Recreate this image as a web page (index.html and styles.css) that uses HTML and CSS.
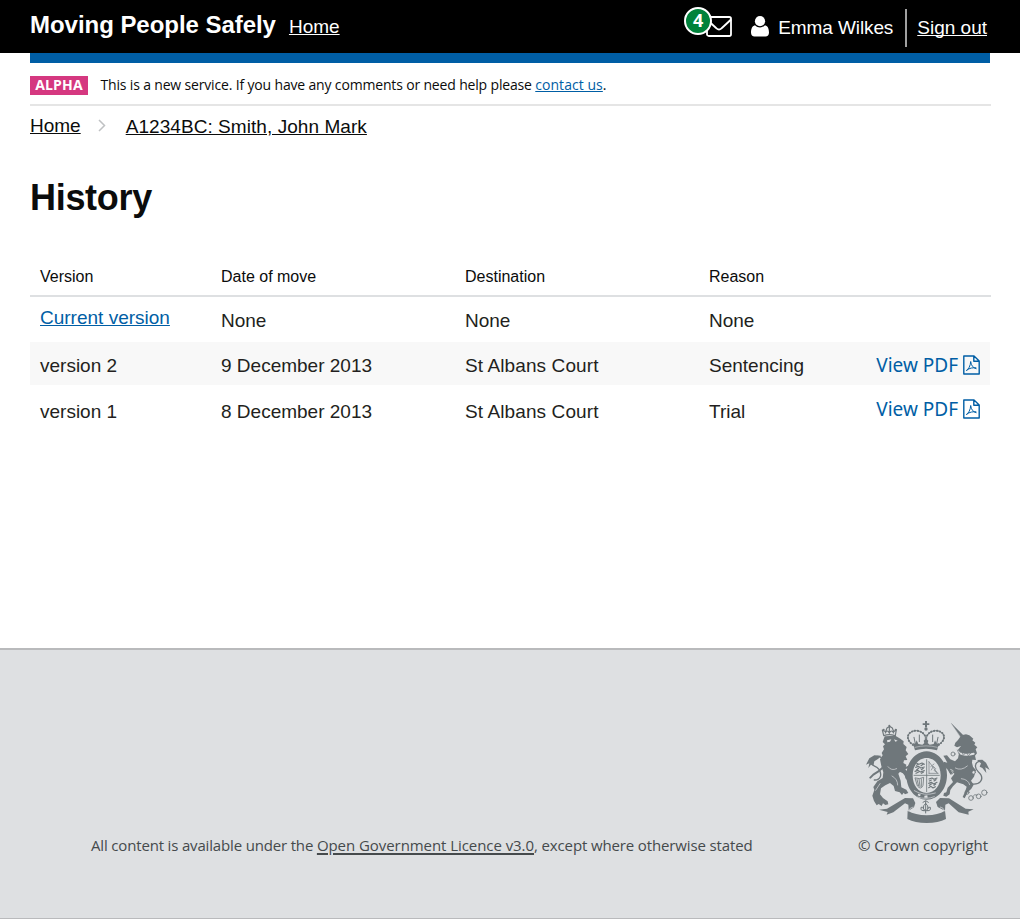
FILE: index.html
```html
<!DOCTYPE html>
<html lang="en">
<head>
<meta charset="utf-8">
<title>History - Moving People Safely</title>
<link rel="stylesheet" href="styles.css">
</head>
<body>
<header class="header">
  <div class="header-brand">
    <span class="site-title">Moving People Safely</span>
    <a class="header-link" href="#">Home</a>
  </div>
  <div class="header-user">
    <a class="mail" href="#">
      <svg class="mail-icon" width="26" height="21" viewBox="0 0 26 21" fill="none" stroke="#fff" stroke-width="1.800" stroke-linejoin="round"><rect x="1" y="1" width="24" height="19" rx="1.800"/><path d="M1 3.500C5 7.500 8 10 10.500 12.300C12.300 14 13.700 14 15.500 12.300C18 10 21 7.500 25 3.500"/></svg>
      <span class="badge">4</span>
    </a>
    <svg class="user-icon" width="18" height="21" viewBox="0 0 18 21" fill="#fff"><circle cx="9" cy="5.200" r="5.100"/><path d="M4 9.200C.8 10 0 13.500 0 16.500C0 19 1.400 20.500 3.500 20.500H14.500C16.600 20.500 18 19 18 16.500C18 13.500 17.200 10 14 9.200C11 12.100 7 12.100 4 9.200Z"/></svg>
    <span class="user-name">Emma Wilkes</span>
    <span class="divider"></span>
    <a class="sign-out" href="#">Sign out</a>
  </div>
</header>

<div class="wrapper">
  <div class="blue-bar"></div>
  <div class="phase">
    <strong class="phase-tag">ALPHA</strong>
    <p class="phase-text">This is a new service. If you have any comments or need help please <a class="link contact" href="#">contact us</a>.</p>
  </div>

  <nav class="crumbs">
    <a class="crumb" href="#">Home</a>
    <svg class="chevron" width="8" height="13" viewBox="0 0 8 13" fill="none" stroke="#bfc1c3" stroke-width="1.500"><path d="M1 1L6.500 6.500L1 12"/></svg>
    <a class="crumb crumb-last" href="#">A1234BC: Smith, John Mark</a>
  </nav>

  <main class="main">
    <h1 class="title">History</h1>
    <table class="history">
      <thead>
        <tr><th class="col-version">Version</th><th class="col-date">Date of move</th><th class="col-dest">Destination</th><th class="col-reason">Reason</th><th></th></tr>
      </thead>
      <tbody>
        <tr class="row-current"><td class="cell-link"><a class="link" href="#">Current version</a></td><td>None</td><td>None</td><td>None</td><td></td></tr>
        <tr class="row-shaded"><td>version 2</td><td>9 December 2013</td><td class="court">St Albans Court</td><td>Sentencing</td>
          <td class="cell-pdf"><a class="pdf" href="#">View PDF <svg class="pdf-icon" width="17" height="20" viewBox="0 0 17 20" fill="none" stroke="#005ea5"><path stroke-width="1.400" stroke-linejoin="round" d="M.8 1H11L16.200 6V19H.8ZM10.800 1V6.200H16.200"/><path stroke-width="1" d="M3.200 15.600C5.300 14.500 7.500 11 7.700 6.500C7.900 10.500 10.500 13.200 13.500 13.800M3.500 15.500C6.500 12.800 10 12.600 13.300 12.800"/></svg></a></td></tr>
        <tr class="row-plain"><td>version 1</td><td>8 December 2013</td><td class="court">St Albans Court</td><td>Trial</td>
          <td class="cell-pdf"><a class="pdf" href="#">View PDF <svg class="pdf-icon" width="17" height="20" viewBox="0 0 17 20" fill="none" stroke="#005ea5"><path stroke-width="1.400" stroke-linejoin="round" d="M.8 1H11L16.200 6V19H.8ZM10.800 1V6.200H16.200"/><path stroke-width="1" d="M3.200 15.600C5.300 14.500 7.500 11 7.700 6.500C7.900 10.500 10.500 13.200 13.500 13.800M3.500 15.500C6.500 12.800 10 12.600 13.300 12.800"/></svg></a></td></tr>
      </tbody>
    </table>
  </main>
</div>

<footer class="footer">
  <p class="licence"><span class="lead">All content is available under the </span><a class="ogl" href="#">Open Government Licence v3.0</a><span class="tail">, except where otherwise stated</span></p>
  <div class="copyright">
    <svg class="crest" width="125" height="104" viewBox="30 30 375 312" fill="#6f777b" stroke="#6f777b" stroke-width="0" stroke-linecap="round" stroke-linejoin="round">
      <!-- lion -->
      <g fill="none" stroke-width="3.500"><path d="M86 76L82 60L92 65L96 54L104 49L112 54L116 65L124 59L121 77M86 77Q103 71 120 77M91 69Q96 57 103 69Q109 57 116 69M103 50V70"/></g>
      <circle cx="103" cy="47" r="3"/><circle cx="86" cy="59" r="3"/><circle cx="122" cy="59" r="3"/>
      <path d="M89 79L121 77L136 86L146 94L145 102L155 111L152 121L160 132L152 139L157 150L147 151L145 159L154 164L151 178L161 190L166 203L158 212L151 205L148 190L137 183L130 191L137 212L139 232L154 239L160 249L150 253L146 248L141 255L134 247L120 243L116 228L105 219L91 226L78 235L75 253L84 264L98 274L100 283L91 285L84 280L80 288L71 282L65 286L57 273L52 257L58 240L55 231L67 214L83 204L85 187L79 168L75 148L83 136L80 129L87 118L84 109L90 103L83 96Z"/>
      <path d="M96 91L109 88L105 95L97 97ZM117 88L128 92L121 95Z" fill="#dee0e2"/>
      <path fill="none" stroke-width="6" d="M86 170L69 185L55 194L46 203M124 155L145 177L163 169M126 178L145 187L163 208"/>
      <path fill="none" stroke="#dee0e2" stroke-width="2" d="M99 170Q109 184 125 176M111 198Q128 207 128 225M62 241L75 221"/>
      <path fill="none" stroke-width="4" d="M58 210C77 211 82 194 72 178C63 165 47 169 48 157C49 145 64 135 78 142"/>
      <path d="M78 137L58 136L43 145L33 164L43 160L40 174L49 163L55 168L58 154L70 146Z"/>
      <!-- unicorn -->
      <path d="M290 41L326 77L319 83Z" stroke-width="1"/>
      <path d="M319 76L333 73L343 76L355 86L352 91L361 98L358 104L367 112L362 118L366 130L360 137L363 150L352 149L351 158L354 170L363 181L357 200L348 212L356 224L349 236L338 247L329 265L323 261L331 243L335 230L325 223L306 217L294 229L286 240L284 253L274 260L265 257L267 249L274 247L278 233L294 216L288 205L298 192L294 180L285 176L292 188L287 194L277 178L265 168L266 155L277 158L271 147L265 137L276 136L286 148L300 154L309 145L312 130L309 119L318 108L306 112L298 107L301 98L309 90Z"/>
      <path fill="none" stroke="#dee0e2" stroke-width="6" d="M304 121Q322 141 356 131"/>
      <path fill="none" stroke-width="2" d="M307 120L312 132L319 123L325 136L334 126L340 137L351 126"/>
      <path fill="none" stroke="#dee0e2" stroke-width="2" d="M301 174Q318 184 337 168M319 206Q340 208 344 224"/>
      <path fill="none" stroke-width="4" d="M352 222C375 224 385 210 378 195C372 184 357 180 362 164C364 155 374 151 384 156"/>
      <path d="M366 150L382 149L393 158L404 180L391 172L394 189L382 174L374 170L378 160Z"/>
      <g fill="none" stroke-width="2.500"><circle cx="294" cy="132" r="6"/><circle cx="292" cy="171" r="6"/><circle cx="290" cy="187" r="5"/><circle cx="336" cy="247" r="6"/><circle cx="348" cy="264" r="7"/><circle cx="371" cy="259" r="7"/><circle cx="388" cy="248" r="8"/><path d="M353 260Q359 250 366 255"/></g>
      <circle cx="356" cy="187" r="5" fill="#dee0e2" stroke-width="2"/>
      <!-- imperial crown -->
      <path d="M210 33H216V40H223V45H216V52H210V45H203V40H210Z"/><circle cx="213" cy="57" r="5"/>
      <path fill="none" stroke-width="6" stroke-dasharray="1 7.500" d="M174 105C145 83 162 62 184 62C198 63 207 70 211 79M251 105C281 83 264 62 242 62C228 63 219 70 215 79"/>
      <path fill="none" stroke-width="3" d="M174 105C145 83 162 62 184 62C198 63 207 70 211 79V105M251 105C281 83 264 62 242 62C228 63 219 70 215 79V105"/>
      <path fill="none" stroke-width="3" d="M177 82L181 101M193 75V95M233 75V95M249 82L245 101"/>
      <path d="M175 105L172 99L181 101L185 91L190 102L202 104L208 99L206 92L213 86L220 92L218 99L224 104L236 102L240 91L245 101L254 99L251 105L246 121Q213 112 180 121Z"/>
      <path fill="none" stroke="#dee0e2" stroke-width="1.500" d="M180 112Q213 103 247 112"/>
      <!-- garter and shield -->
      <path fill-rule="evenodd" d="M215 124C246 124 276 155 276 195C276 237 249 269 215 269C181 269 154 237 154 195C154 155 184 124 215 124ZM215 144C190 144 173 167 173 196C173 226 190 249 215 249C240 249 257 226 257 196C257 167 240 144 215 144Z"/>
      <path fill="none" stroke-width="2.500" d="M215 149V245M177 196H253"/>
      <g fill="none" stroke-width="3.500"><path d="M185 160L192 163L201 159L208 163M182 172L190 169L197 174L208 171M180 184L188 181L196 186L208 182M185 166L190 163M198 167L204 163M185 179L191 175M199 179L205 175M183 190L190 187M199 190L205 187"/><path d="M222 207L231 204L237 208L246 204M221 220L229 217L236 222L246 217M221 233L228 229L234 234L241 230M223 213L229 210M237 213L243 209M223 226L229 222M237 226L242 222"/></g>
      <path fill="none" stroke-width="2" d="M221 154L248 190M222 190V157M222 190H249M229 180L235 169L242 176L237 181L245 187M227 170L237 162"/>
      <path fill="none" stroke-width="2.500" d="M181 204Q194 209 206 202L204 226Q198 241 188 229ZM186 208L191 228M192 207L195 230M199 207L199 229"/>
      <path d="M177 242L190 244Q213 257 241 247L240 258Q213 272 187 261Z"/>
      <path fill="none" stroke="#dee0e2" stroke-width="2" d="M178 242Q207 260 241 249M187 261Q213 270 238 260"/>
      <g fill="#dee0e2"><path d="M190 251L198 254L194 259L188 256ZM208 257L217 256L218 263L208 263Z"/></g>
      <!-- motto ribbon -->
      <path d="M72 299L96 296L150 264L174 265L181 279L177 292L161 302L160 284L150 280L115 307L95 314L98 306ZM356 298L332 296L282 265L255 264L243 276L248 291L270 302L271 284L281 280L311 307L341 314L340 305Z"/>
      <path d="M158 302Q181 315 215 316Q249 315 270 302L273 327Q250 339 215 339Q180 339 157 327Z"/>
      <path fill="none" stroke="#dee0e2" stroke-width="2" d="M161 303Q164 292 174 291M269 303Q266 292 256 291"/>
      <path fill="none" stroke-width="3" d="M212 274V309M204 277L212 272L220 277M212 280Q203 286 205 296M212 280Q221 286 219 296M209 300Q196 306 198 292Q203 288 207 298M216 300Q228 306 226 292Q221 288 217 298M205 302H220"/>
    </svg>
    <a class="crown" href="#">© Crown copyright</a>
  </div>
</footer>
</body>
</html>
```

FILE: styles.css
```css
* { box-sizing: border-box; }
body {
  margin: 0;
  font: 19px/20px "Liberation Sans", Arial, sans-serif;
  color: #0b0c0c;
  background: #fff;
}
h1, p { margin: 0; }

.header {
  display: flex;
  justify-content: space-between;
  height: 53px;
  padding: 0 33px 0 30px;
  background: #000;
  color: #fff;
}
.header a { color: #fff; }
.header-brand { display: flex; align-items: baseline; gap: 13px; padding-top: 11px; }
.site-title { font-size: 24px; line-height: 28px; font-weight: bold; letter-spacing: -0.04px; }
.header-link, .sign-out { text-decoration-skip-ink: none; }
.header-user { display: flex; align-items: flex-start; }
.mail { position: relative; display: block; width: 26px; margin-top: 16px; }
.mail-icon { display: block; }
.badge {
  position: absolute;
  left: -22px;
  top: -9px;
  width: 28px;
  height: 28px;
  border: 2px solid #fff;
  border-radius: 50%;
  background: #00823b;
  font: bold 18px/23px "Open Sans", sans-serif;
  text-align: center;
}
.user-icon { margin: 16px 0 0 19px; }
.user-name { margin: 18px 0 0 9px; letter-spacing: -0.1px; }
.divider { width: 2px; height: 38px; margin: 9px 10px 0 12px; background: #a0a0a0; }
.sign-out { margin-top: 18px; }

.wrapper { height: 595px; padding: 0 30px; }
.blue-bar { height: 10px; background: #005ea5; }
.phase {
  display: flex;
  align-items: flex-start;
  width: 961px;
  height: 43px;
  padding-top: 13px;
  border-bottom: 2px solid #e5e5e5;
  font: 14px/19px "Open Sans", sans-serif;
}
.phase-tag {
  width: 58px;
  height: 19px;
  background: #d53880;
  color: #fff;
  text-align: center;
  line-height: 18px;
  letter-spacing: 0.15px;
}
.phase-text { margin-left: 12.500px; line-height: 18px; letter-spacing: -0.165px; white-space: nowrap; }
.contact { letter-spacing: 0.05px; }
.link { color: #005ea5; }

.crumbs { display: flex; align-items: flex-start; padding-top: 10px; }
.crumb { color: #0b0c0c; }
.crumb-last { margin-top: 1px; letter-spacing: 0.06px; }
.chevron { margin: 3px 20px 0 17px; }

.title { margin-top: 40px; font-size: 36px; line-height: 42px; letter-spacing: -0.3px; }

.history {
  width: 961px;
  margin-top: 39px;
  border-collapse: separate;
  border-spacing: 0;
  table-layout: fixed;
}
.history th {
  height: 39px;
  padding: 9px 10px 0;
  border-bottom: 2px solid #dee0e2;
  font-size: 16px;
  font-weight: normal;
  text-align: left;
  vertical-align: top;
}
.history td { padding: 0 10px; vertical-align: top; color: #231f20; }
.history .court { letter-spacing: 0.1px; }
.col-version { width: 181px; }
.col-date, .col-dest { width: 244px; }
.col-reason { width: 167px; }
.row-current td { height: 45px; padding-top: 14px; }
.row-current .cell-link { padding-top: 11px; }
.row-shaded { background: linear-gradient(to right, #f8f8f8 960px, #fff 960px); }
.row-shaded td { height: 43px; padding-top: 14px; }
.row-plain td { height: 45px; padding-top: 17px; }
.history .cell-pdf { padding: 13px 11px 0 0; }
.history .row-plain .cell-pdf { padding-top: 14px; }
.pdf {
  display: flex;
  justify-content: flex-end;
  gap: 5px;
  color: #005ea5;
  font-family: "Noto Sans", sans-serif;
  line-height: 20px;
  text-decoration: none;
}

.footer {
  display: flex;
  justify-content: space-between;
  align-items: flex-end;
  height: 271px;
  margin-bottom: 1px;
  padding: 0 30px 63px 91px;
  border-top: 2px solid #b9babc;
  border-bottom: 1px solid #b9babc;
  background: #dee0e2;
  color: #454a4c;
  font: 15px/20px "Open Sans", sans-serif;
}
.footer a { color: #454a4c; }
.licence { white-space: nowrap; }
.lead { letter-spacing: -0.165px; }
.ogl { letter-spacing: -0.06px; text-decoration-thickness: 2px; text-underline-offset: 2px; }
.tail { letter-spacing: -0.13px; }
.copyright { display: flex; flex-direction: column; align-items: flex-end; gap: 11px; }
.footer .crown { margin-right: 2px; letter-spacing: -0.07px; text-decoration: none; }
```
